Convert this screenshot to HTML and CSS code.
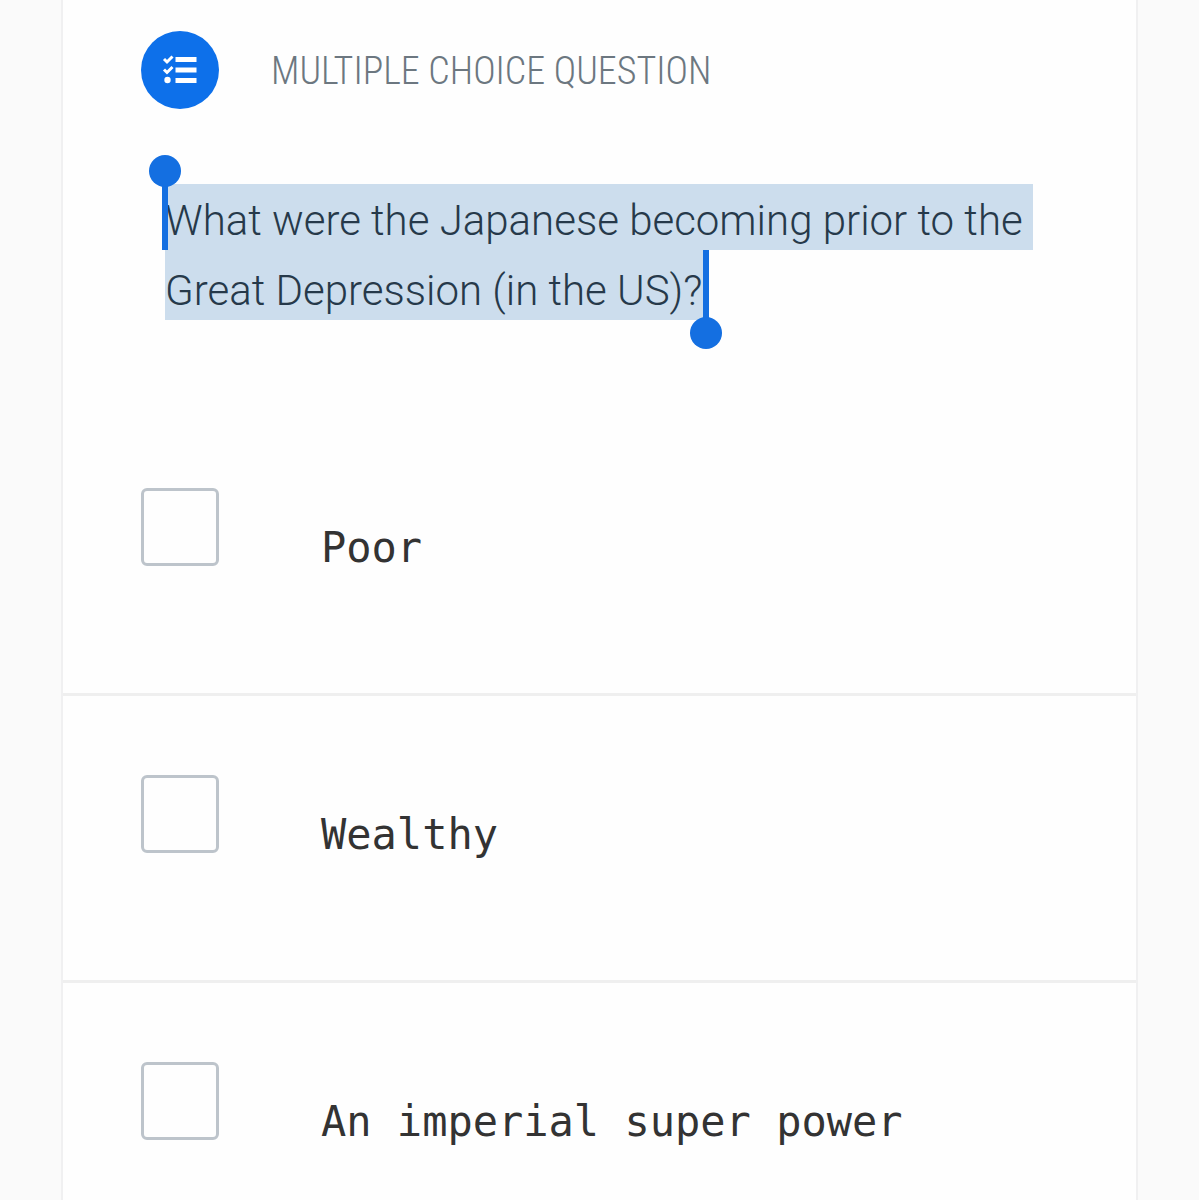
FILE: index.html
```html
<!DOCTYPE html>
<html lang="en">
<head>
    <meta charset="UTF-8">
    <meta name="viewport" content="width=device-width, initial-scale=1.0">
    <title>Multiple Choice Question</title>
    <link rel="stylesheet" href="styles.css">
</head>
<body>
    <main class="card">
        <header class="question-type">
            <svg class="type-icon" viewBox="0 0 78 78" aria-hidden="true">
                <circle cx="39" cy="39" r="39" fill="#0d70ea"/>
                <path d="M23 28l3 3l5.500-5.500M23 38.500l3 3l5.500-5.500" fill="none" stroke="#fff" stroke-width="3"/>
                <circle cx="26.500" cy="49" r="3.200" fill="#fff"/>
                <path d="M34.500 26h21v5h-21zM34.500 36.500h21v5h-21zM34.500 47h21v5h-21z" fill="#fff"/>
            </svg>
            <h1>MULTIPLE CHOICE QUESTION</h1>
        </header>

        <p class="question"><span class="handle start"></span><mark>What were the Japanese becoming prior to the&nbsp;</mark><br><mark class="last-line">Great Depression (in the US)?</mark><span class="handle end"></span></p>

        <form class="answers">
            <label class="answer">
                <input type="checkbox" name="answer" value="poor">
                <span>Poor</span>
            </label>
            <label class="answer">
                <input type="checkbox" name="answer" value="wealthy">
                <span>Wealthy</span>
            </label>
            <label class="answer">
                <input type="checkbox" name="answer" value="imperial">
                <span>An imperial super power</span>
            </label>
        </form>
    </main>
</body>
</html>
```
FILE: styles.css
```css
* {
    box-sizing: border-box;
}
body {
    margin: 0;
    background-color: #fafafa;
}
.card {
    min-height: 100vh;
    margin: 0 61px;
    border: 2px solid #f0f0f1;
    border-width: 0 2px;
    background-color: #fefefe;
}
.question-type {
    display: flex;
    align-items: center;
    gap: 52px;
    padding: 31px 78px 0;
}
.type-icon {
    width: 78px;
    height: 78px;
}
h1 {
    margin: 0;
    padding-top: 2px;
    font-family: "Roboto Condensed", "Roboto", sans-serif;
    font-size: 38px;
    font-weight: 300;
    color: #6c7780;
}
.question {
    margin: 77px 0 83px;
    padding: 0 78px 0 102px;
    font-family: "Roboto", sans-serif;
    font-size: 42px;
    font-weight: 300;
    line-height: 70px;
    color: #26394a;
}
mark {
    padding: 12px 0 5px;
    background-color: #ccdded;
    color: inherit;
}
.last-line {
    padding: 16px 2px 5px 0;
}
.handle {
    position: relative;
}
/* stem and knob of a text selection handle */
.handle::before,
.handle::after {
    content: "";
    position: absolute;
    background-color: #146fe1;
}
.handle::before {
    left: -3px;
    width: 6px;
    height: 68px;
}
.handle::after {
    left: -16px;
    width: 32px;
    height: 32px;
    border-radius: 50%;
}
.start::before {
    top: -14px;
}
.start::after {
    top: -41px;
}
.end {
    margin-left: 2px;
}
.end::before {
    top: -16px;
}
.end::after {
    top: 51px;
}
.answer {
    display: flex;
    align-items: flex-start;
    gap: 102px;
    padding: 79px 78px 127px;
}
.answer + .answer {
    border-top: 3px solid #efefef;
}
.answer:last-child {
    padding-bottom: 0;
}
.answer input {
    appearance: none;
    flex: none;
    width: 78px;
    height: 78px;
    margin: 0;
    border: 3px solid #bdc4cb;
    border-radius: 6px;
}
.answer input:checked {
    background-color: #0d70ea;
}
/* last + first lines sit a little below the box */
.answer span {
    padding-top: 28px;
    font-family: "DejaVu Sans Mono", monospace;
    font-size: 42px;
    font-weight: 200;
    line-height: 64px;
    margin-bottom: -14px;
    color: #333;
}
```
